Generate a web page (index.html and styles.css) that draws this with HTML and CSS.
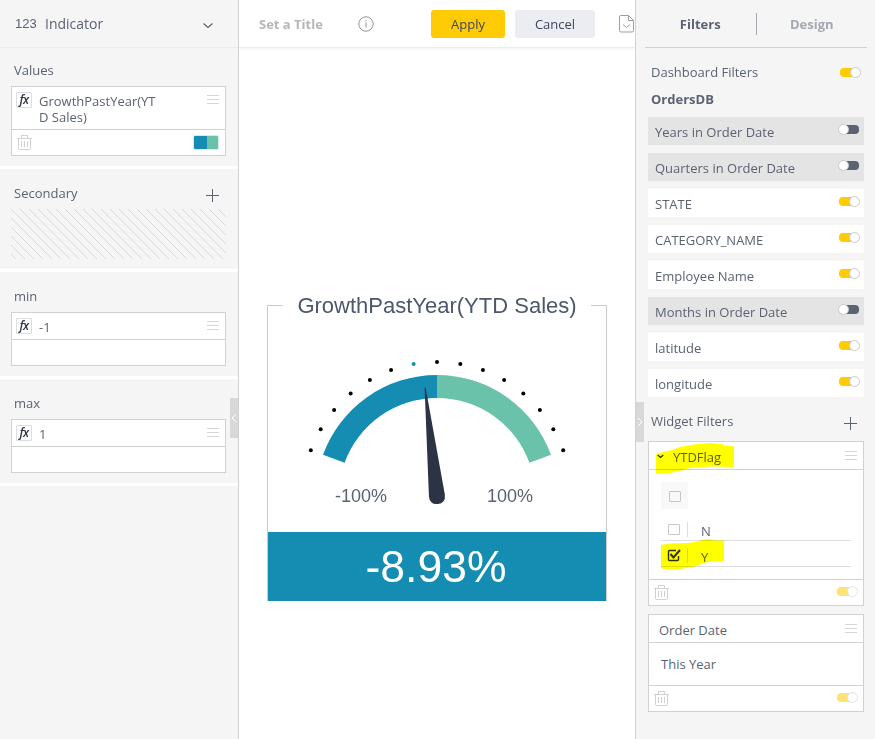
FILE: index.html
```html
<!DOCTYPE html>
<html lang="en">

<head>
    <meta charset="UTF-8">
    <meta name="viewport" content="width=device-width, initial-scale=1.0">
    <title>Widget Editor</title>
    <link rel="stylesheet" href="styles.css">
</head>

<body>
    <!-- shared icons -->
    <svg class="sprite">
        <symbol id="menu" viewBox="0 0 12 9">
            <path d="M0 .5h12M0 4.5h12M0 8.5h12" stroke="#d5d6d9" fill="none" />
        </symbol>
        <symbol id="trash" viewBox="0 0 15 16">
            <path d="M0 3.5h15M4.5 3V.5h6V3M1.5 4v9.5q0 1 1 1h10q1 0 1-1V4M4.5 6v6M7.5 6v6M10.5 6v6" stroke="#d0d1d4" fill="none" />
        </symbol>
        <symbol id="plus" viewBox="0 0 13 13">
            <path d="M0 6.5h13M6.5 0v13" stroke="#5b6372" fill="none" />
        </symbol>
    </svg>

    <div class="editor">
        <aside class="panel left">
            <div class="type-select">
                <span class="num">123</span>
                <span class="type-name">Indicator</span>
                <svg class="chevron" width="12" height="7" viewBox="0 0 12 7"><path d="M1.500 1.500l4.500 4L10.500 1.500" stroke="#5b6372" stroke-width="1.3" fill="none" /></svg>
            </div>

            <section class="group values">
                <div class="group-title">Values</div>
                <div class="card">
                    <div class="card-top tall">
                        <i class="fx">fx</i>
                        <span class="formula">GrowthPastYear(YT<br>D Sales)</span>
                        <svg class="menu"><use href="#menu" /></svg>
                    </div>
                    <div class="card-bottom">
                        <svg class="trash"><use href="#trash" /></svg>
                        <span class="swatch"></span>
                    </div>
                </div>
            </section>

            <section class="group secondary">
                <div class="group-title">Secondary <svg class="plus"><use href="#plus" /></svg></div>
                <svg class="hatch" width="215" height="50">
                    <defs>
                        <pattern id="lines" width="9" height="9" patternUnits="userSpaceOnUse">
                            <path d="M-1 -1L10 10M8 -1L10 1M-1 8L1 10" stroke="#d3d3d3" stroke-width=".8" />
                        </pattern>
                    </defs>
                    <rect width="215" height="50" fill="url(#lines)" />
                </svg>
            </section>

            <section class="group limit">
                <div class="group-title">min</div>
                <div class="card">
                    <div class="card-top">
                        <i class="fx">fx</i>
                        <span class="formula">-1</span>
                        <svg class="menu"><use href="#menu" /></svg>
                    </div>
                    <div class="card-bottom"></div>
                </div>
            </section>

            <section class="group limit">
                <div class="group-title">max</div>
                <div class="card">
                    <div class="card-top">
                        <i class="fx">fx</i>
                        <span class="formula">1</span>
                        <svg class="menu"><use href="#menu" /></svg>
                    </div>
                    <div class="card-bottom"></div>
                </div>
            </section>

            <div class="handle"><svg width="6" height="10" viewBox="0 0 6 10"><path d="M5 1L1 5l4 4" stroke="#fff" fill="none" /></svg></div>
        </aside>

        <main class="center">
            <header class="toolbar">
                <span class="title">Set a Title</span>
                <svg class="info" width="16" height="16" viewBox="0 0 16 16"><circle cx="8" cy="8" r="7.2" stroke="#8d929c" fill="none" /><path d="M8 6.5v5M8 4v1.3" stroke="#8d929c" /></svg>
                <button class="btn apply">Apply</button>
                <button class="btn cancel">Cancel</button>
                <svg class="doc" width="15" height="18" viewBox="0 0 15 18"><path d="M9.5.5H2Q.5.5.5 2v13.500q0 1.500 1.500 1.500h11q1.500 0 1.500-1.500V5.500zM9.500.500v5h5M4 9.500l3.500 3 3.500-3" stroke="#9a9fa8" fill="none" /></svg>
            </header>

            <div class="widget">
                <div class="widget-title"><span>GrowthPastYear(YTD Sales)</span></div>
                <svg class="gauge" width="338" height="226" viewBox="268 306 338 226">
                    <path d="M323 454.800A121.300 121.300 0 0 1 437 375V398A98.300 98.300 0 0 0 344.600 462.700Z" fill="#158cb2" />
                    <path d="M551 454.800A121.300 121.300 0 0 0 437 375V398A98.300 98.300 0 0 1 529.400 462.700Z" fill="#6bc2aa" />
                    <g id="ticks"></g>
                    <path d="M436.500 387h1L445 495.500Q445 504 437 504T429 495.500Z" fill="#2c3344" transform="rotate(-6.250 437 496.300)" />
                    <text x="335" y="502">-100%</text>
                    <text x="487" y="502">100%</text>
                </svg>
                <div class="widget-value">-8.93%</div>
            </div>
        </main>

        <aside class="panel right">
            <nav class="tabs">
                <span class="tab active">Filters</span>
                <span class="tab">Design</span>
            </nav>

            <div class="row-title">Dashboard Filters <span class="toggle on"></span></div>
            <div class="source">OrdersDB</div>
            <ul class="filters">
                <li class="off">Years in Order Date <span class="toggle"></span></li>
                <li class="off">Quarters in Order Date <span class="toggle"></span></li>
                <li>STATE <span class="toggle on"></span></li>
                <li>CATEGORY_NAME <span class="toggle on"></span></li>
                <li>Employee Name <span class="toggle on"></span></li>
                <li class="off">Months in Order Date <span class="toggle"></span></li>
                <li>latitude <span class="toggle on"></span></li>
                <li>longitude <span class="toggle on"></span></li>
            </ul>

            <div class="row-title widget-filters">Widget Filters <svg class="plus"><use href="#plus" /></svg></div>

            <div class="filter-card">
                <div class="filter-head">
                    <svg class="caret" width="7" height="5" viewBox="0 0 7 5"><path d="M.7 1l2.800 2.500L6.300 1" stroke="#2c3344" stroke-width="1.300" fill="none" /></svg>
                    YTDFlag
                    <svg class="menu"><use href="#menu" /></svg>
                </div>
                <div class="options">
                    <div class="all"><span class="box"></span></div>
                    <div class="option"><span class="box"></span><span class="option-name">N</span></div>
                    <div class="option">
                        <svg class="check" width="14" height="13" viewBox="0 0 14 13"><path d="M9 1.500H2.500q-1 0-1 1v8q0 1 1 1h8q1 0 1-1V7" stroke="#2c3344" stroke-width="1.400" fill="none" /><path d="M3.500 5l3 3.500L13 1" stroke="#2c3344" stroke-width="2" fill="none" /></svg>
                        <span class="option-name">Y</span>
                    </div>
                </div>
                <div class="filter-foot">
                    <svg class="trash"><use href="#trash" /></svg>
                    <span class="toggle on faded"></span>
                </div>
                <!-- marker strokes over the header and the checked option -->
                <svg class="marker" width="80" height="130" viewBox="655 442 80 130">
                    <path d="M656 454V474L670 473 677 471.500 693 467.500 710 466.500 734 467V446H725L724 444.500 710 443 697 444 680 447 672 450 663 452Z" />
                    <path d="M661 545V567L663 569 675 570 693 567 707 562 724 561.500V540.500H717L707 539 699 541 688 543 670 543.500Z" />
                </svg>
            </div>

            <div class="filter-card">
                <div class="filter-head plain">Order Date <svg class="menu"><use href="#menu" /></svg></div>
                <div class="period">This Year</div>
                <div class="filter-foot">
                    <svg class="trash"><use href="#trash" /></svg>
                    <span class="toggle on faded"></span>
                </div>
            </div>

            <div class="handle"><svg width="6" height="10" viewBox="0 0 6 10"><path d="M1 1l4 4-4 4" stroke="#fff" fill="none" /></svg></div>
        </aside>
    </div>

    <script>
        // one dot every 10 degrees around the gauge
        const ticks = document.getElementById('ticks');
        for (let a = 20; a <= 160; a += 10) {
            const dot = document.createElementNS('http://www.w3.org/2000/svg', 'circle');
            const rad = a * Math.PI / 180;
            dot.setAttribute('cx', 437 + 134.3 * Math.cos(rad));
            dot.setAttribute('cy', 496.3 - 134.3 * Math.sin(rad));
            dot.setAttribute('r', 2);
            dot.setAttribute('fill', a === 100 ? '#158cb2' : '#000');
            ticks.appendChild(dot);
        }
    </script>
</body>

</html>
```
FILE: styles.css
```css
*,
*::before,
*::after {
    box-sizing: border-box;
}

body {
    margin: 0;
    font-family: "Open Sans", sans-serif;
    font-size: 13px;
    line-height: 16px;
    color: #5b6372;
    background: #fff;
}

svg {
    display: block;
    flex-shrink: 0;
}

.sprite {
    display: none;
}

.editor {
    display: flex;
    height: 739px;
    overflow: hidden;
}

.panel {
    position: relative;
    flex-shrink: 0;
    background: #f5f5f5;
}

.left {
    width: 239px;
    border-right: 1px solid #d0d1d3;
}

.right {
    width: 240px;
    padding: 0 11px 0 12px;
    border-left: 1px solid #d0d1d3;
}

.handle {
    position: absolute;
    top: 398px;
    right: 0;
    display: flex;
    align-items: center;
    justify-content: center;
    width: 8px;
    height: 40px;
    background: #d8d8d8;
}

.right .handle {
    top: 402px;
    left: 0;
}

.menu {
    width: 12px;
    height: 9px;
    margin-left: auto;
}

.trash {
    width: 15px;
    height: 16px;
}

.plus {
    width: 13px;
    height: 13px;
    margin-left: auto;
}

/* left panel */

.type-select {
    display: flex;
    align-items: center;
    height: 48px;
    padding: 0 24px 0 15px;
    border-bottom: 1px solid #ebebeb;
    font-size: 14px;
}

.num {
    width: 30px;
    font-family: "Liberation Sans", Arial, sans-serif;
    font-size: 13px;
}

.chevron {
    margin: 3px 0 0 auto;
}

.group {
    padding: 14px 12px 0 11px;
    border-bottom: 3px solid #fff;
}

.values {
    height: 121px;
}

.secondary {
    height: 103px;
    padding-top: 16px;
}

.limit {
    height: 107px;
    padding-top: 16px;
}

.group-title {
    display: flex;
    height: 24px;
    padding: 0 7px 0 3px;
}

.secondary .plus {
    margin-top: 4px;
}

.card {
    border: 1px solid #d0d1d3;
    background: #fff;
}

.card-top {
    display: flex;
    height: 27px;
    padding: 5px 6px 0 4px;
    border-bottom: 1px solid #d0d1d3;
}

.card-top.tall {
    height: 43px;
}

.card-top .menu {
    margin-top: 3px;
}

.fx {
    width: 16px;
    height: 16px;
    border: 1px solid #dcdde0;
    border-radius: 1px;
    font-size: 12px;
    font-weight: 600;
    line-height: 14px;
    letter-spacing: -0.5px;
    text-align: center;
    color: #2c3344;
}

.formula {
    padding: 1px 0 0 7px;
}

.card-bottom {
    display: flex;
    align-items: center;
    justify-content: space-between;
    height: 25px;
    padding: 0 6px 0 5px;
}

.swatch {
    width: 26px;
    height: 15px;
    border: 1px solid #d5e8ea;
    border-radius: 2px;
    background: linear-gradient(90deg, #158cb2 54%, #6bc2aa 54%);
}

/* middle */

.center {
    flex: 1;
    min-width: 0;
    overflow: hidden;
}

.toolbar {
    display: flex;
    align-items: center;
    height: 48px;
    padding-left: 20px;
    border-bottom: 1px solid #ebebeb;
    box-shadow: 0 1px 3px rgba(0, 0, 0, 0.06);
}

.title {
    width: 99px;
    font-weight: bold;
    color: #b5b6b8;
}

.btn {
    height: 28px;
    padding: 0;
    border: 0;
    border-radius: 3px;
    font: inherit;
    color: #3e465a;
}

.apply {
    width: 74px;
    margin-left: 57px;
    background: #ffcb05;
}

.cancel {
    width: 80px;
    margin: 0 24px 0 10px;
    background: #ecedf2;
}

.widget {
    width: 340px;
    margin: 244px 0 0 28px;
    font-family: "Liberation Sans", Arial, sans-serif;
}

.widget-title {
    display: flex;
    align-items: center;
    height: 28px;
    margin-bottom: -14px;
    font-size: 22px;
    line-height: 28px;
    white-space: nowrap;
    color: #4d576b;
}

.widget-title::before,
.widget-title::after {
    content: "";
    width: 16px;
    height: 1px;
    margin-top: -1px;
    background: #c9cacc;
}

.widget-title span {
    flex: 1;
    text-align: center;
}

.gauge {
    box-sizing: content-box;
    border: solid #c9cacc;
    border-width: 0 1px;
}

.gauge text {
    font-size: 18px;
    fill: #5b6372;
}

.widget-value {
    height: 69px;
    padding-right: 2px;
    border: solid #c9cacc;
    border-width: 0 1px;
    background: #158cb2;
    color: #fff;
    font-size: 44.5px;
    line-height: 69px;
    text-align: center;
}

/* right panel */

.tabs {
    display: flex;
    align-items: center;
    height: 48px;
    margin: 0 -3px 0 -3px;
    border-bottom: 1px solid #d0d1d3;
}

.tab {
    flex: 1;
    height: 22px;
    line-height: 22px;
    font-weight: bold;
    text-align: center;
    color: #a4a8b0;
}

.tab.active {
    border-right: 1px solid #a4a8b0;
    color: #5b6372;
}

.row-title {
    display: flex;
    justify-content: space-between;
    padding: 16px 4px 0 3px;
}

.row-title .toggle {
    margin-top: 4px;
}

.source {
    padding: 11px 3px 10px;
    font-weight: bold;
}

.filters {
    margin: 0;
    padding: 0;
    list-style: none;
}

.filters li {
    display: flex;
    justify-content: space-between;
    height: 28px;
    margin-bottom: 8px;
    padding: 7px 5px 0 7px;
    background: #fff;
}

.filters li.off {
    background: #e4e4e4;
}

.filters .toggle {
    margin-top: 1px;
}

.toggle {
    display: flex;
    align-items: center;
    width: 20px;
    height: 9px;
    border-radius: 4px;
    background: #5b6372;
}

.toggle::before {
    content: "";
    flex-shrink: 0;
    width: 11px;
    height: 11px;
    margin-left: -1px;
    border: 1px solid #c9cacc;
    border-radius: 50%;
    background: #fff;
}

.toggle.on {
    background: #ffcb05;
}

.toggle.on::before {
    margin-left: 10px;
}

.toggle.faded {
    opacity: 0.55;
}

.widget-filters {
    height: 36px;
    padding: 8px 3px 0;
}

.widget-filters .plus {
    margin: 4px 4px 0 auto;
}

.filter-card {
    position: relative;
    margin-bottom: 8px;
    border: 1px solid #d0d1d3;
    background: #fff;
}

.filter-head {
    display: flex;
    height: 28px;
    padding: 7px 6px 0 9px;
    border-bottom: 1px solid #d0d1d3;
}

.filter-head.plain {
    padding-left: 10px;
}

.filter-head .menu {
    margin-top: 2px;
}

.caret {
    margin: 5px 9px 0 -1px;
}

.options {
    height: 109px;
    padding: 12px;
}

.all {
    display: flex;
    align-items: center;
    justify-content: center;
    width: 27px;
    height: 27px;
    margin-bottom: 6px;
    padding-top: 1px;
    background: #f8f8f8;
}

.box {
    width: 12px;
    height: 11px;
    border: 1px solid #c4c6ca;
    border-radius: 1px;
}

.option {
    display: flex;
    align-items: center;
    height: 26px;
    padding: 3px 0 0 7px;
    border-bottom: 1px solid #dcdde0;
}

.option-name {
    height: 15px;
    margin-left: 7px;
    padding-left: 13px;
    border-left: 1px solid #dcdde0;
    line-height: 19px;
}

.check {
    margin: 0 -1px 0 -1px;
}

.filter-foot {
    display: flex;
    justify-content: space-between;
    height: 26px;
    padding: 5px 6px 0 5px;
    border-top: 1px solid #d0d1d3;
}

.filter-foot .toggle {
    margin-top: 2px;
}

.period {
    height: 42px;
    padding: 13px 12px;
}

.marker {
    position: absolute;
    top: 0;
    left: 6px;
    fill: #ff0;
    mix-blend-mode: multiply;
}
```
